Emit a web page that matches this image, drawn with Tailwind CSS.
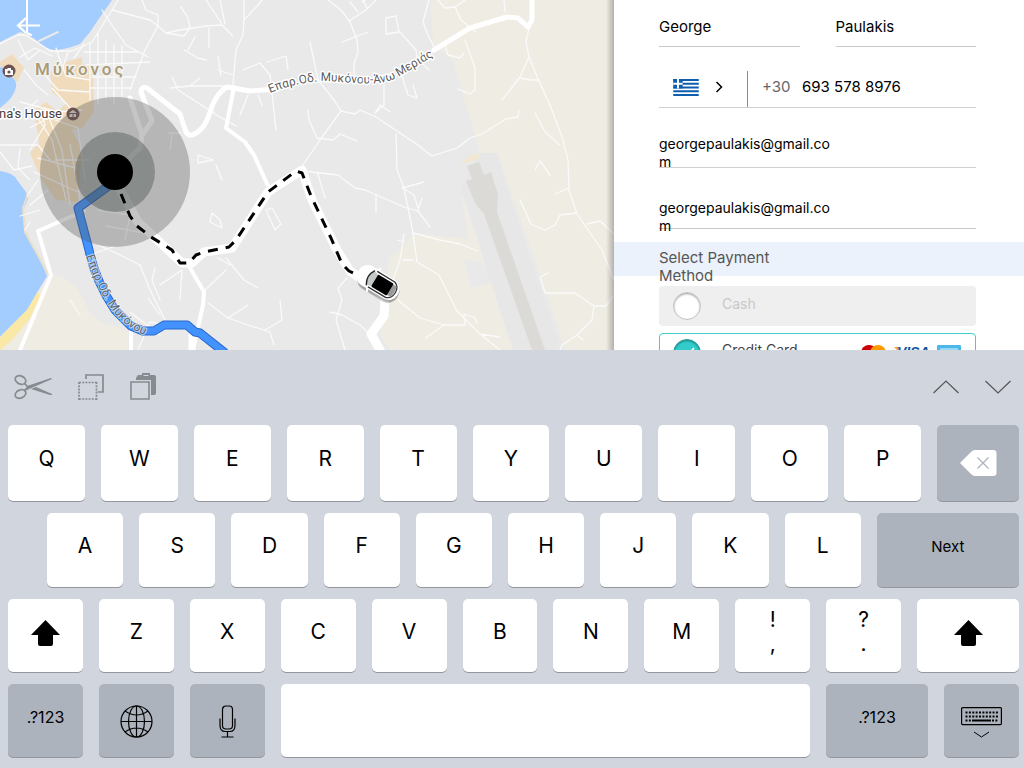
<!DOCTYPE html>
<html lang="en">
<head>
<meta charset="utf-8">
<meta name="viewport" content="width=device-width, initial-scale=1">
<title>Passenger details</title>
<script src="https://cdn.jsdelivr.net/npm/@tailwindcss/browser@4"></script>
</head>
<body class="flex h-screen flex-col overflow-hidden bg-[#d1d5dd] font-['Inter','Noto_Sans',sans-serif] text-black">
<main class="flex min-h-0 flex-1 overflow-hidden">
  <section aria-label="Map" class="relative min-w-0 flex-1 overflow-hidden bg-[#e9e9e9]">
    <svg class="block h-full w-full" viewBox="0 0 614 350" preserveAspectRatio="xMinYMin slice" fill="none" stroke-linecap="round" stroke-linejoin="round">
      <rect width="614" height="350" fill="#e9e9e9"/>
      <!-- countryside -->
      <path d="M431 0 433 45 453 60 480 153 497 153 503 170 545 290 566 350H614V0Z" fill="#efece3"/>
      <path d="M500 153 614 500V0H500Z" fill="#efece3"/>
      <path d="M388 259 400 250 414 233 469 239 461 192 485 264 464 259 471 288 491 283 513 350H390L380 334 388 310Z" fill="#efece3"/>
      <path d="M52 274Q68 276 78 290L90 312Q100 325 115 326L128 331V350H0V338Z" fill="#efece3"/>
      <!-- airport -->
      <path d="M480 153H498L503 178 561 350H513L485 264 475 225 461 190Z" fill="#e7e7e7"/>
      <path d="M460 164 470 155 480 153 478 160Z" fill="#f0e8d3"/>
      <path d="M467 166 479 162 484 175 491 172 498 195 497 212 545 350H532L484 214 475 203 466 181 472 179Z" fill="#dcdad6"/>
      <!-- built-up areas -->
      <g fill="#f0dcbd">
        <path d="M0 62 12 54 24 68 17 82 8 71 0 66Z"/>
        <path d="M50 72 63 63 82 57 82 64 93 66 94 112 82 128 72 130 82 150 78 202 56 200 42 180 30 153 39 143 34 110 46 102 58 112 66 103 52 92Z"/>
      </g>
      <!-- sea -->
      <g fill="#a3ccff">
        <path d="M0 0H112L98 20 90 32 80 44Q64 50 54 50 43 48 36 40L27 34 20 32 0 42Z"/>
        <path d="M0 67Q8 68 11 76 17 80 16 87 14 98 0 108Z"/>
        <path d="M0 171Q14 173 17 180L26 192 28 199 23 210 25 232 38 255 47 276 38 291 27 310 0 337Z"/>
      </g>
      <path d="M38 291 27 310 0 337V350L12 340 30 318 40 298Z" fill="#fae9a6"/>
      <path d="M28 194 23 208 25 232 47 272 51 278" stroke="#e9dfca" stroke-width="2"/>
      <path d="M39 41 58 32" stroke="#e9e9e9" stroke-width="2"/>
      <!-- lanes -->
      <g stroke="#fafafa" stroke-width="1.3">
        <path d="M0 44 18 35 25 35 40 44 50 51 72 51 92 42 112 10 118 0M112 10 150 20 158 26 145 50 130 90"/>
        <path d="M90 44V100M98 34V104M106 40V98M114 45V104M122 46V98M84 52H138M86 65 150 62M92 77H136M90 88H132M102 10 114 28 126 45 148 57"/>
        <path d="M18 40 28 60 40 50M24 70 36 85 48 95M20 57 35 48 52 56M60 60 66 76 90 80M45 75 58 90 90 92M52 88 72 110M20 102 58 112 82 110"/>
        <path d="M0 145H38L50 160M40 110 45 125 30 150M34 112 52 140 66 200M45 108 62 150 70 205M55 120 78 128 85 180M55 160 90 160M38 158 76 168M34 172 78 192M70 144 82 210"/>
        <path d="M20 148 18 168 30 180M0 152 14 170 32 166M27 196 38 180M30 205 48 190M20 216 40 210M30 222 25 230"/>
        <path d="M60 60 56 48M68 52 62 70M74 58 84 44M28 108 38 100M30 128 48 118"/>
        <path d="M142 0 146 10 158 15V26L166 33 184 36 190 28 188 18 181 7M166 33 180 30 206 26 222 25 233 36"/>
        <path d="M184 50 198 58 206 60M209 28V48M195 37 188 50M225 24 220 0M222 24 206 0M218 56 221 76M244 0V20L243 35 236 50 233 84M244 20 258 5 262 0M267 62 286 56 288 70M243 70 260 63 270 75 276 130M170 88 190 86 200 78M190 86 233 86M172 77 178 90 220 117 236 126M248 95 240 115M258 95 262 106M218 70 233 75"/>
        <path d="M328 0 341 10 350 22 357 40 358 52 354 64V78M349 21 366 10 376 0M350 2 358 12M363 0 367 8M342 42 368 32M429 0 423 22 427 33 434 47M310 42 318 80 334 100 341 111 355 114 360 110 376 117 400 133 418 145 432 156 457 148 470 138 482 134 506 119 518 117 519 111"/>
        <path d="M341 111 322 137 303 165M308 110 309 120 317 138 333 140 340 134 357 141M384 85V105L375 113 380 105 390 112M386 34V18L396 16 399 32 386 34M399 31 416 50 417 58 429 70M402 76 408 95 417 98 413 85M396 134 397 170 404 188 413 233"/>
        <path d="M438 0 445 8 455 7 465 0M455 7 461 20 476 32M465 40 475 68 475 90 470 94 458 89M444 42 448 55 460 58 464 53M504 0 505 12M529 28 526 42 529 57 520 77 502 100M529 57 538 79 550 105 562 137 568 160 569 190 577 214 602 250 614 280M520 78 530 80H538M535 113 545 132 560 145M535 170 540 161 550 175M520 200 531 224 545 230 555 225 560 215 577 213M587 224 600 221 614 234M569 188 555 194"/>
        <path d="M413 233 417 262 439 275 457 311 480 334 500 350M413 233 440 240 460 244 478 251M404 234 400 260 393 280M397 240 404 242M403 260H413M398 300 420 318 444 325H465L464 314 475 318 477 323M444 325 426 338M480 334 500 337M548 273 540 277 545 293 560 293 575 293 594 306H606L614 295M594 306 592 320 577 335 562 345 560 350M577 335 583 340"/>
        <path d="M303 171 338 175 355 188 365 190 404 207 418 211 430 227M318 174 325 198M365 0 362 2M402 188 424 182M403 188 414 195 418 208M376 195V212M422 198 418 210"/>
        <path d="M347 278 338 288 342 300 336 320 345 350M330 312 342 315 360 325 371 335"/>
        <path d="M213 160 198 155 198 163 213 160M216 165 222 180M212 213 220 220 222 228 210 222 212 213M266 210 275 230 281 224 272 208 266 210M94 243 120 255 140 265 150 290 165 320M95 253 116 246M148 298 160 315M160 285 182 270M182 270 180 300M155 268 152 280 160 300M226 258 244 280 258 288M230 265 218 258M208 303 228 318 248 325 270 332 274 345M228 318 248 305M205 290 226 270M280 300 282 320 265 330M130 312 160 335M138 350 150 322 166 325M70 300 80 315"/>
        <path d="M168 133H180M172 135 170 150M85 215 88 250M98 210 130 215 125 240M106 226 155 235"/>
      </g>
      <!-- main roads -->
      <g stroke="#fff" stroke-width="5">
        <path d="M434 50 470 28 507 17 518 18 528 27 532 20V0"/>
        <path d="M130 98 142 135 140 148 122 165M142 135 152 121 141 92Q141 86 147 88L180 114 186 132Q190 138 196 133 206 128 212 106 218 92 227 87L250 91 275 89"/>
        <path d="M234 87 226 128 245 142 254 155 268 186" stroke-width="4"/>
        <path d="M38 231 84 211M38 231 51 275 20 350" stroke-width="4"/>
        <path d="M131 325V350M189 266 204 292 203 305 193 350" stroke-width="4"/>
        <path d="M192 335V350" stroke-width="7"/>
        <path d="M119 188 138 222 182 263H192L204 252 232 248 268 192 302 170 312 200 337 250 350 271 370 285 385 297 384 316 371 334 380 350" stroke-width="9"/>
      </g>
      <path d="M27 0V33L31 35" stroke="#fff" stroke-width="2"/>
      <!-- blue route -->
      <path d="M114 182 78 208 89 250Q95 280 115 310L131 326 143 331H154L164 325H187L195 332 200 333 224 352" stroke="#2866cd" stroke-width="9"/>
      <path d="M114 182 78 208 89 250Q95 280 115 310L131 326 143 331H154L164 325H187L195 332 200 333 224 352" stroke="#4293ff" stroke-width="7"/>
      <!-- labels -->
      <path id="coastRoad" d="M86 256Q96 286 110 307T150 337"/>
      <path id="upperRoad" d="M270 93Q297 82 325 81C350 82 380 88 398 77L446 49"/>
      <g class="font-['Roboto','Noto_Sans',sans-serif]" stroke="#fff" stroke-width="3" paint-order="stroke">
        <text class="text-[12px]" fill="#666" stroke-opacity=".6" stroke-width="2"><textPath href="#coastRoad">Επαρ.Οδ. Μυκόνου</textPath></text>
        <text class="text-[12px]" fill="#5c5c5c"><textPath href="#upperRoad">Επαρ.Οδ. Μυκόνου-Άνω Μεριάς</textPath></text>
        <text x="35" y="75" class="text-[17px] font-medium tracking-[3px]" fill="#a69a78" stroke="#f3f1ec">Μύκονος</text>
        <text x="-1" y="118" class="text-[13px]" fill="#4b3c3c">na's House</text>
      </g>
      <g fill="#6f5350">
        <circle cx="9" cy="71" r="6.5"/><circle cx="73" cy="114" r="6.5"/>
      </g>
      <path d="M5 69H7L8 68H11V70H13V75H5Z" fill="#fff"/><circle cx="9" cy="72" r="1.6" fill="#6f5350"/>
      <path d="M69 113 73 110 77 113ZM70 114H76V117H69Z" fill="#e9dcd9"/><path d="M73 117V114" stroke="#6f5350"/>
      <!-- pickup marker -->
      <circle cx="115" cy="172" r="75" fill="#555" fill-opacity=".34"/>
      <circle cx="115" cy="172" r="40" fill="#4b5351" fill-opacity=".42"/>
      <path d="M121 194 130 216 137 226 151 237 172 250 180 263H189L196 255 204 252 229 247 236 240 268 192 296 171 302 173 311 196 331 238 342 264 349 271 358 275" stroke="#000" stroke-width="3" stroke-linecap="butt" stroke-dasharray="10 8"/>
      <circle cx="115" cy="172" r="18" fill="#000"/>
      <!-- car -->
      <g transform="translate(379 283) rotate(31)">
        <rect x="-21" y="-8" width="44" height="22" rx="10" fill="#000" opacity=".14"/>
        <rect x="-22" y="-10" width="45" height="23" rx="10" fill="#000" opacity=".2"/>
        <rect x="-24" y="-11" width="46" height="22" rx="10" fill="#fff"/>
        <path d="M-8-10-6-13M-8 10-6 13" stroke="#fff" stroke-width="2"/>
        <path d="M-10-8Q-14 0-10 8L-3 6V-6Z" fill="#c5c8c8"/>
        <path d="M-10-8Q-15 0-10 8" stroke="#222" stroke-width="1.4"/>
        <path d="M-7-9H13Q19-7 19 0T13 9H-7" stroke="#333" stroke-width="1.3"/>
        <path d="M12-6H17Q19 0 17 6H12Z" fill="#999"/>
        <rect x="-5" y="-7" width="18" height="14" rx="1" fill="#000"/>
      </g>
    </svg>
    <button aria-label="Back" class="absolute left-4 top-3 h-7 w-7 text-white">
      <svg class="h-7 w-7" viewBox="0 0 28 28" fill="none" stroke="currentColor" stroke-width="2.2"><path d="M24 13.500H2M10 6 2 13.500 10 21"/></svg>
    </button>
    <div class="absolute inset-y-0 right-0 w-2 bg-linear-to-r from-transparent to-black/25"></div>
  </section>

  <form class="w-[410px] shrink-0 overflow-hidden bg-white text-[15px] leading-[18px]">
    <div class="flex gap-9 pl-[45px] pr-12">
      <input aria-label="First name" value="George" class="h-[47px] w-0 flex-1 border-b border-[#c9c9c9] pt-1.5 outline-none">
      <input aria-label="Last name" value="Paulakis" class="h-[47px] w-0 flex-1 border-b border-[#c9c9c9] pt-1.5 outline-none">
    </div>
    <div class="pl-[45px] pr-12">
      <div class="mt-6 flex h-[37px] items-stretch border-b border-[#cfcfcf]">
        <button type="button" aria-label="Country: Greece" class="flex w-[89px] items-center gap-4 border-r border-[#8c8c8c] pl-3.5 pb-1">
          <svg class="h-[17px] w-[26px]" viewBox="0 0 27 18"><path fill="#fff" d="M0 0H27V18H0Z"/><path stroke="#0d5eaf" stroke-width="2" d="M0 1H27M0 5H27M0 9H27M0 13H27M0 17H27"/><path fill="#0d5eaf" d="M0 0H10V10H0Z"/><path stroke="#fff" stroke-width="2" d="M5 0V10M0 5H10"/></svg>
          <svg class="h-3 w-2" viewBox="0 0 8 12" fill="none" stroke="#000" stroke-width="1.5"><path d="M1.500 1 6.500 6 1.500 11"/></svg>
        </button>
        <span class="w-[54px] pl-3.5 pt-[7px] text-[#666]">+30</span>
        <input type="tel" aria-label="Phone number" value="693 578 8976" class="w-0 flex-1 pb-1 outline-none">
      </div>
      <div class="h-[60px] overflow-hidden border-b border-[#cfcfcf] pt-[27px] text-[14px]">
        <textarea aria-label="Email" class="block h-9 w-[180px] resize-none overflow-hidden break-all leading-[18px] outline-none">georgepaulakis@gmail.com</textarea>
      </div>
      <div class="h-[61px] border-b border-[#c9c9c9] pt-[31px] text-[14px]">
        <textarea aria-label="Confirm email" class="block h-9 w-[180px] resize-none overflow-hidden break-all leading-[18px] outline-none">georgepaulakis@gmail.com</textarea>
      </div>
    </div>
    <div class="mt-[13px] h-[34px] bg-[#ebf2fb] pl-[45px] pt-[7px]">
      <h2 class="w-[130px] text-[#555]">Select Payment Method</h2>
    </div>
    <div class="pl-[45px] pr-12 pt-2.5">
      <label class="flex h-10 items-center gap-[21px] rounded bg-[#efefef] pl-3.5 text-[14px] text-[#c8c8c8]">
        <input type="radio" name="pay" disabled class="size-7 appearance-none rounded-full border border-[#c4c4c4] bg-white shadow-[inset_0_1px_2px_#999]">
        <span class="pb-1">Cash</span>
      </label>
      <label class="mt-[7px] flex h-11 items-start rounded border border-[#43cccb] pl-[13px] pt-[5px] text-[14px] text-[#444]">
        <span class="relative size-7">
          <input type="radio" name="pay" checked class="block size-7 appearance-none rounded-full border border-[#2a9f9e] bg-[#34cccb] shadow-[inset_0_1px_2px_#187d7c]">
          <svg class="absolute inset-0" viewBox="0 0 28 28" fill="none" stroke="#fff" stroke-width="1.600"><path d="M8 15 12 19 21 9"/></svg>
        </span>
        <span class="flex-1 pl-[21px] pt-0.5">Credit Card</span>
        <svg class="mr-3.5 mt-1.5 h-4 w-[100px]" viewBox="0 0 100 16"><circle cx="8" cy="8" r="8" fill="#c00"/><circle cx="17" cy="8" r="8" fill="#f90"/><path d="M33 2H38L41 10Z" fill="#f2a52b"/><text x="36" y="12" font-size="14" font-weight="900" font-style="italic" fill="#0b569e" font-family="Liberation Sans">VISA</text><rect x="76" width="24" height="16" rx="1" fill="#4bb8e8"/><path d="M79 4H97" stroke="#b4e2f8" stroke-width="1.500"/></svg>
      </label>
    </div>
  </form>
</main>

<section aria-label="Keyboard" class="shrink-0 pb-[11px] pl-2 pr-[5px] text-[21px]">
  <div class="flex h-[75px] items-center pb-0.5 text-[#858b8e]">
    <button aria-label="Cut" class="ml-1.5"><svg class="h-[26px] w-[38px]" viewBox="0 0 38 26" fill="none" stroke="currentColor" stroke-width="1.700"><ellipse cx="6.500" cy="6" rx="5.500" ry="4" transform="rotate(25 6.500 6)"/><ellipse cx="6.500" cy="20" rx="5.500" ry="4" transform="rotate(-25 6.500 20)"/><path d="M10 9 14 13M10 17 14 13"/><path d="M13 12 37 4 38 5 15 15 11 17ZM17 15 22 13 38 20V21L36 21Z" fill="currentColor" stroke="none"/></svg></button>
    <button aria-label="Copy" class="ml-[26px]"><svg class="size-[26px]" viewBox="0 0 26 26" fill="none" stroke="currentColor" stroke-width="1.700"><path d="M8 5V1H25V18H20"/><path d="M1 8.500H19M1 25H19M1 8V26M18.500 8V26" stroke-dasharray="2 1.200"/></svg></button>
    <button aria-label="Paste" class="ml-[26px]"><svg class="size-[27px]" viewBox="0 0 27 27" fill="none" stroke="currentColor" stroke-width="1.600"><path d="M6 5 8 2H12V0H20V2H24Q26 2 26 4V20Q26 22 24 22H21V7H6Z" fill="currentColor" stroke="none"/><path d="M13.500 2.500H18.500" stroke="#d1d5dd" stroke-width="1"/><path d="M1 9H19V26H1Z" fill="#d1d5dd"/></svg></button>
    <button aria-label="Previous field" class="ml-auto text-[#555]"><svg class="h-[14px] w-7" viewBox="0 0 28 14" fill="none" stroke="currentColor" stroke-width="1.200"><path d="M1.500 13 14 1 26.500 13"/></svg></button>
    <button aria-label="Next field" class="ml-6 mr-[7px] text-[#555]"><svg class="h-[14px] w-7" viewBox="0 0 28 14" fill="none" stroke="currentColor" stroke-width="1.200"><path d="M1.500 1 14 13 26.500 1"/></svg></button>
  </div>

  <div class="flex flex-col gap-3">
    <div class="flex h-[76px] gap-4 *:min-w-0 *:flex-[77] *:rounded-[5px] *:bg-white *:pb-2 *:shadow-[0_1px_0_#94989e]">
      <button>Q</button><button>W</button><button>E</button><button>R</button><button>T</button><button>Y</button><button>U</button><button>I</button><button>O</button><button>P</button>
      <button aria-label="Delete" class="flex flex-[82]! items-center justify-center bg-[#adb3bd]! pb-0!"><svg class="h-[26px] w-[37px]" viewBox="0 0 37 26"><path d="M0 13 11 2Q13 0 15 0H33Q36.500 0 36.500 3V23Q36.500 26 33 26H15Q13 26 11 24Z" fill="#fff"/><path d="M17.500 7.500 28.500 18.500M28.500 7.500 17.500 18.500" stroke="#adb3bd" stroke-width="1.300"/></svg></button>
    </div>
    <div class="flex h-[74px] gap-4 pl-[39px] *:min-w-0 *:flex-[76] *:rounded-[5px] *:bg-white *:pb-2 *:shadow-[0_1px_0_#94989e]">
      <button>A</button><button>S</button><button>D</button><button>F</button><button>G</button><button>H</button><button>J</button><button>K</button><button>L</button>
      <button class="flex-[142]! bg-[#adb3bd]! pb-1.5! text-[15px]">Next</button>
    </div>
    <div class="flex h-[73px] gap-4 *:min-w-0 *:flex-[75] *:rounded-[5px] *:bg-white *:pb-2 *:shadow-[0_1px_0_#94989e]">
      <button aria-label="Shift" class="flex items-center justify-center pb-1.5!"><svg class="h-[26px] w-[29px]" viewBox="0 0 29 26"><path d="M14.500 0 29 15H22V24Q22 26 20 26H9Q7 26 7 24V15H0Z"/></svg></button>
      <button>Z</button><button>X</button><button>C</button><button>V</button><button>B</button><button>N</button><button>M</button>
      <button class="leading-6">!<br>,</button><button class="leading-6">?<br>.</button>
      <button aria-label="Right shift" class="flex flex-[102]! items-center justify-center pb-1.5!"><svg class="h-[26px] w-[29px]" viewBox="0 0 29 26"><path d="M14.500 0 29 15H22V24Q22 26 20 26H9Q7 26 7 24V15H0Z"/></svg></button>
    </div>
    <div class="flex h-[73px] gap-4 *:min-w-0 *:flex-[75] *:rounded-[5px] *:bg-[#adb3bd] *:shadow-[0_1px_0_#94989e]">
      <button class="pb-2 text-[16px]">.?123</button>
      <button aria-label="Switch language" class="flex items-center justify-center pt-0.5"><svg class="size-[33px]" viewBox="0 0 33 33" fill="none" stroke="#000" stroke-width="1.200"><circle cx="16.500" cy="16.500" r="15.500"/><ellipse cx="16.500" cy="16.500" rx="8" ry="15.500"/><path d="M16.500 1V32M1 16.500H32M5 6Q16.500 14 28 6M5 27Q16.500 19 28 27"/></svg></button>
      <button aria-label="Dictate" class="flex items-center justify-center pt-0.5"><svg class="h-[33px] w-[17px]" viewBox="0 0 17 33" fill="none" stroke="#000" stroke-width="1.200"><rect x="3.500" y="1" width="10" height="23" rx="3.500"/><path d="M1 13.500V20Q1 26.500 6 26.500H11Q16 26.500 16 20V13.500M8.500 26.500V32M2.500 32H14.500"/></svg></button>
      <button aria-label="Space" class="flex-[529]! bg-white!"></button>
      <button class="flex-[102]! pb-2 text-[16px]">.?123</button>
      <button aria-label="Hide keyboard" class="flex items-center justify-center pt-1"><svg class="h-[31px] w-[41px]" viewBox="0 0 41 31" fill="none" stroke="#000"><rect x=".6" y=".6" width="39.800" height="17" rx="1" stroke-width="1.200"/><path d="M4.500 5.500H37M4.500 9.500H37M4.500 13.500H10M31 13.500H37" stroke-width="2" stroke-dasharray="2 1.380"/><path d="M11 13.500H30" stroke-width="2"/><path d="M13 25 20.500 30 28 25"/></svg></button>
    </div>
  </div>
</section>
</body>
</html>
